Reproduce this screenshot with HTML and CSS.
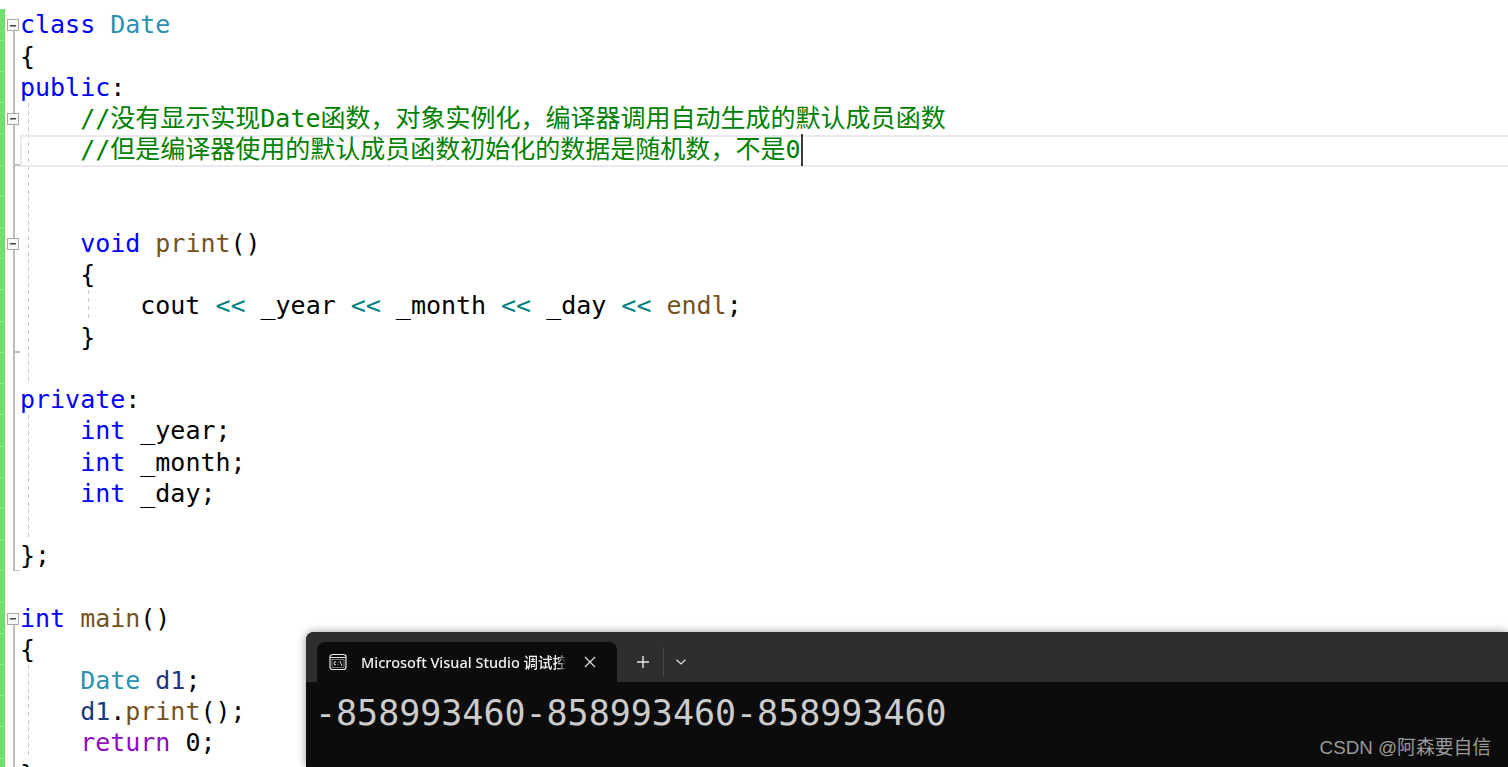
FILE: index.html
```html
<!DOCTYPE html>
<html lang="zh">
<head>
<meta charset="utf-8">
<title>Date</title>
<link rel="stylesheet" href="styles.css">
</head>
<body>
<main class="editor">
  <div class="row"><i class="mark"></i><span class="fold box"></span><code class="text"><b class="kw">class</b> <b class="ty">Date</b></code></div>
  <div class="row"><i class="mark"></i><span class="fold line"></span><code class="text">{</code></div>
  <div class="row"><i class="mark"></i><span class="fold line"></span><code class="text"><b class="kw">public</b>:</code></div>
  <div class="row g1"><i class="mark"></i><span class="fold box joined"></span><code class="text">    <b class="cm">//没有显示实现Date函数，对象实例化，编译器调用自动生成的默认成员函数</b></code></div>
  <div class="row g1"><i class="mark"></i><span class="fold end"></span><code class="text current">    <b class="cm">//但是编译器使用的默认成员函数初始化的数据是随机数，不是0</b><i class="caret"></i></code></div>
  <div class="row g1"><i class="mark"></i><span class="fold line"></span><code class="text"></code></div>
  <div class="row g1"><i class="mark"></i><span class="fold line"></span><code class="text"></code></div>
  <div class="row g1"><i class="mark"></i><span class="fold box joined"></span><code class="text">    <b class="kw">void</b> <b class="fn">print</b>()</code></div>
  <div class="row g1"><i class="mark"></i><span class="fold line"></span><code class="text">    {</code></div>
  <div class="row g1 g2"><i class="mark"></i><span class="fold line"></span><code class="text">        cout <b class="op">&lt;&lt;</b> _year <b class="op">&lt;&lt;</b> _month <b class="op">&lt;&lt;</b> _day <b class="op">&lt;&lt;</b> <b class="fn">endl</b>;</code></div>
  <div class="row g1"><i class="mark"></i><span class="fold end"></span><code class="text">    }</code></div>
  <div class="row g1"><i class="mark"></i><span class="fold line"></span><code class="text"></code></div>
  <div class="row"><i class="mark"></i><span class="fold line"></span><code class="text"><b class="kw">private</b>:</code></div>
  <div class="row g1"><i class="mark"></i><span class="fold line"></span><code class="text">    <b class="kw">int</b> _year;</code></div>
  <div class="row g1"><i class="mark"></i><span class="fold line"></span><code class="text">    <b class="kw">int</b> _month;</code></div>
  <div class="row g1"><i class="mark"></i><span class="fold line"></span><code class="text">    <b class="kw">int</b> _day;</code></div>
  <div class="row g1"><i class="mark"></i><span class="fold line"></span><code class="text"></code></div>
  <div class="row"><i class="mark"></i><span class="fold end"></span><code class="text">};</code></div>
  <div class="row"><i class="mark"></i><span class="fold"></span><code class="text"></code></div>
  <div class="row"><i class="mark"></i><span class="fold box"></span><code class="text"><b class="kw">int</b> <b class="fn">main</b>()</code></div>
  <div class="row"><i class="mark"></i><span class="fold line"></span><code class="text">{</code></div>
  <div class="row g1"><i class="mark"></i><span class="fold line"></span><code class="text">    <b class="ty">Date</b> <b class="var">d1</b>;</code></div>
  <div class="row g1"><i class="mark"></i><span class="fold line"></span><code class="text">    <b class="var">d1</b>.<b class="fn">print</b>();</code></div>
  <div class="row g1"><i class="mark"></i><span class="fold line"></span><code class="text">    <b class="ret">return</b> 0;</code></div>
  <div class="row"><i class="mark"></i><span class="fold line"></span><code class="text">}</code></div>
</main>

<section class="terminal">
  <header class="tabstrip">
    <div class="tab">
      <svg class="tab-icon" width="18" height="18" viewBox="0 0 18 18" aria-hidden="true">
        <rect x="1" y="1.500" width="16" height="15" rx="2.500" fill="none" stroke="#e8e8e8" stroke-width="1.200"/>
        <path d="M1.500 4.500h15" stroke="#e8e8e8" stroke-width="1"/>
        <rect x="3" y="6.500" width="12" height="8" fill="none" stroke="#bdbdbd" stroke-width=".6"/>
        <path d="M7 8.800A1.400 1.600 0 1 0 7 11.800M9 9v.7M9 11.300v.7M11 8l2 5" fill="none" stroke="#f0f0f0" stroke-width=".9"/>
      </svg>
      <span class="tab-title">Microsoft Visual Studio 调试控制台</span>
      <svg class="tab-close" width="12" height="12" viewBox="0 0 12 12" aria-hidden="true">
        <path d="M1 1l10 10M11 1L1 11" stroke="#e6e6e6" stroke-width="1.100"/>
      </svg>
    </div>
    <svg class="plus" width="14" height="14" viewBox="0 0 14 14" aria-hidden="true">
      <path d="M7 1v12M1 7h12" stroke="#e8e8e8" stroke-width="1.400"/>
    </svg>
    <span class="divider"></span>
    <svg class="chev" width="12" height="8" viewBox="0 0 12 8" aria-hidden="true">
      <path d="M1.500 1.800L6 6l4.500-4.200" fill="none" stroke="#e0e0e0" stroke-width="1.200"/>
    </svg>
  </header>
  <pre class="output">-858993460-858993460-858993460</pre>
  <footer class="watermark">CSDN @阿森要自信</footer>
</section>
</body>
</html>
```
FILE: styles.css
```css
html, body {
  margin: 0;
  height: 767px;
  overflow: hidden;
  background: #fff;
}

.editor {
  padding-top: 9.450px;
  font: 25px/31.200px "DejaVu Sans Mono", "Noto Sans CJK SC", monospace;
  letter-spacing: -0.02px;
  color: #000;
}

.row {
  display: flex;
  height: 31.220px;
}

.row.g1 {
  background: linear-gradient(#c8c8c8 50%, transparent 50%) 28px 0 / 1px 8px repeat-y;
}

.row.g1.g2 {
  background:
    linear-gradient(#c8c8c8 50%, transparent 50%) 28px 0 / 1px 8px repeat-y,
    linear-gradient(#c8c8c8 50%, transparent 50%) 88px 0 / 1px 8px repeat-y;
}

.mark {
  flex: none;
  width: 5px;
  background: linear-gradient(#6fdf70 96%, #8ae88b 96%);
}

.fold {
  flex: none;
  width: 15px;
  position: relative;
}

.fold.line::before,
.fold.end::before,
.fold.joined::before {
  content: "";
  position: absolute;
  left: 8px;
  top: 0;
  bottom: 0;
  width: 2px;
  background: #bdbdbd;
}

.fold.end::after {
  content: "";
  position: absolute;
  left: 8px;
  bottom: 0;
  width: 7px;
  height: 1.500px;
  background: #bdbdbd;
}

.fold.box:not(.joined)::before {
  content: "";
  position: absolute;
  left: 8px;
  top: 21px;
  bottom: 0;
  width: 2px;
  background: #bdbdbd;
}

.fold.box::after {
  content: "";
  position: absolute;
  left: 2px;
  top: 10px;
  width: 10px;
  height: 10px;
  border: 1px solid #a8a8a8;
  background: linear-gradient(#444, #444) center / 6px 1.500px no-repeat #f8f8f8;
}

.text {
  flex: 1;
  min-width: 0;
  font: inherit;
  white-space: pre;
  position: relative;
}

.text b { font-weight: 400; }

.current::before {
  content: "";
  position: absolute;
  left: 0;
  right: -3px;
  top: 1px;
  bottom: -1px;
  border: 2px solid #e9e9ef;
}

.caret {
  position: absolute;
  left: 781px;
  top: 0;
  width: 1.500px;
  height: 32px;
  background: #3a3a3a;
}

.kw { color: #0000ff; }
.ty { color: #2b91af; }
.fn { color: #74531f; }
.cm { color: #008000; position: relative; letter-spacing: 0.005px; }
.op { color: #008080; }
.var { color: #1f377f; }
.ret { color: #8f08c4; }

.terminal {
  position: absolute;
  left: 306px;
  top: 632px;
  right: 0;
  bottom: 0;
  display: flex;
  flex-direction: column;
  background: #0c0c0c;
  border-top-left-radius: 8px;
  box-shadow: 0 0 10px rgba(0, 0, 0, .4);
}

.tabstrip {
  flex: none;
  height: 50px;
  box-sizing: border-box;
  padding: 10px 0 0 11px;
  display: flex;
  align-items: flex-start;
  background: #2e2e2e;
  border-top-left-radius: 8px;
}

.tab {
  flex: none;
  width: 300px;
  height: 40px;
  box-sizing: border-box;
  padding-left: 12px;
  display: flex;
  align-items: center;
  background: #0c0c0c;
  border-radius: 8px 8px 0 0;
}

.tab-icon { flex: none; }

.tab-title {
  flex: none;
  width: 205px;
  margin: 0 0 1px 14px;
  overflow: hidden;
  white-space: nowrap;
  font: 500 14.500px/20px "Noto Sans", "Noto Sans CJK SC", sans-serif;
  color: #f2f2f2;
  -webkit-mask-image: linear-gradient(90deg, #000 96%, transparent);
  mask-image: linear-gradient(90deg, #000 96%, transparent);
}

.tab-close {
  flex: none;
  margin-left: 18px;
}

.plus {
  flex: none;
  margin: 13px 0 0 19px;
}

.divider {
  flex: none;
  width: 1px;
  height: 30px;
  margin: 5px 0 0 13px;
  background: #454545;
}

.chev {
  flex: none;
  margin: 16px 0 0 11px;
}

.output {
  margin: 0;
  padding: 10px 0 0 9px;
  font: 35px/42px "DejaVu Sans Mono", monospace;
  letter-spacing: -0.02px;
  color: #cccccc;
}

.watermark {
  position: absolute;
  right: 17px;
  bottom: 7px;
  font: 18.800px/24px "Liberation Sans", "Noto Sans CJK SC", sans-serif;
  color: #9a9a9a;
}
```
